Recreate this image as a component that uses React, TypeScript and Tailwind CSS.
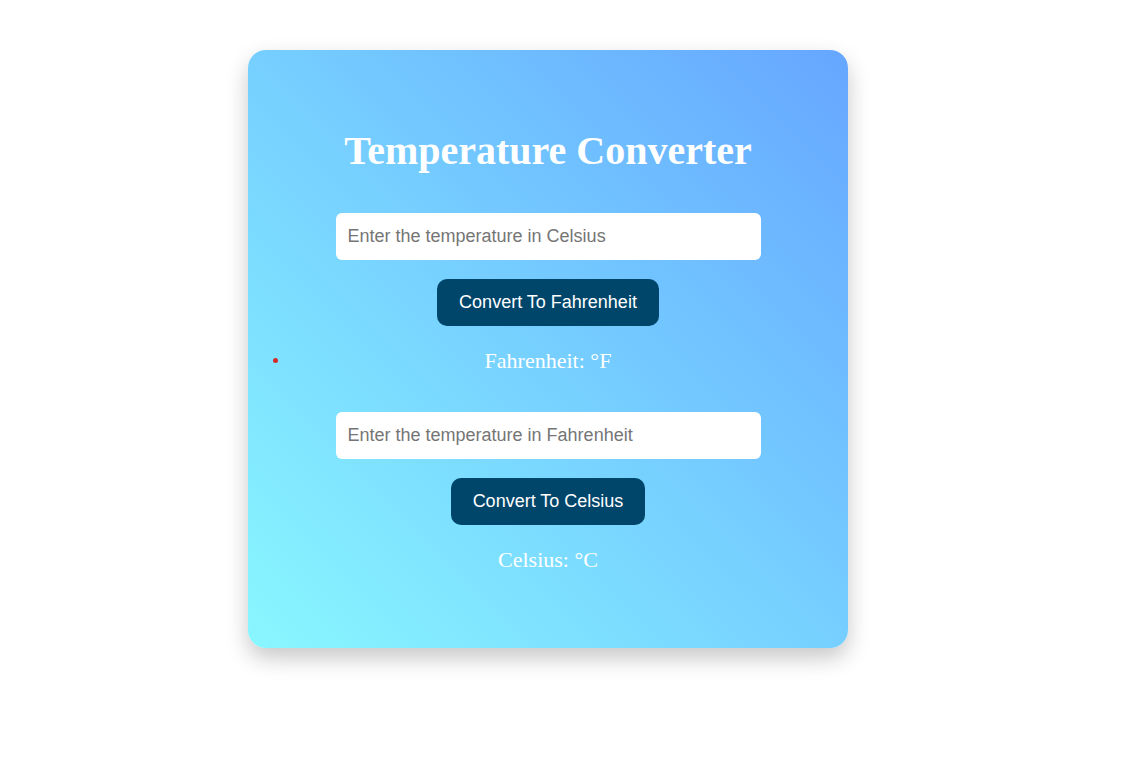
import { useState } from 'react'

function Converter({
  placeholder,
  label,
  result,
  unit,
  dot,
}: {
  placeholder: string
  label: string
  result: string
  unit: string
  dot?: boolean
}) {
  const [value, setValue] = useState('')

  return (
    <>
      <input
        value={value}
        onChange={(e) => setValue(e.target.value)}
        placeholder={placeholder}
        className="h-[47px] w-[425px] rounded-[6px] bg-white px-3 font-['Liberation_Sans',Arial,sans-serif] text-[18px] text-[#333] outline-none placeholder:text-[#757575]"
      />
      <button className="mt-[19px] h-[47px] rounded-[10px] bg-[#00456a] px-[22px] font-['Liberation_Sans',Arial,sans-serif] text-[18px] text-white">
        {label}
      </button>
      <div className="mt-[22px] grid w-full grid-cols-[1fr_auto_1fr] items-center">
        <div className="pl-[25px]">
          {dot && <span className="block h-[5px] w-[5px] rounded-full bg-[#d42a2a]" />}
        </div>
        <p className="font-['Liberation_Serif','Times_New_Roman',serif] text-[22px] leading-[25px] text-white">
          {result}: {unit}
        </p>
        <div />
      </div>
    </>
  )
}

export default function App() {
  return (
    <div className="min-h-[762px] bg-white pt-[50px] pl-[248px]">
      <div className="flex h-[598px] w-[600px] flex-col items-center rounded-[18px] bg-linear-to-tr from-[#89f7fe] to-[#66a6ff] pt-[78px] shadow-[0_10px_22px_rgba(0,0,0,0.22)]">
        <h1 className="font-['Liberation_Serif','Times_New_Roman',serif] text-[40px] leading-[46px] font-bold text-white">
          Temperature Converter
        </h1>
        <div className="mt-[39px] flex w-full flex-col items-center">
          <Converter placeholder="Enter the temperature in Celsius" label="Convert To Fahrenheit" result="Fahrenheit" unit="°F" dot />
        </div>
        <div className="mt-[39px] flex w-full flex-col items-center">
          <Converter placeholder="Enter the temperature in Fahrenheit" label="Convert To Celsius" result="Celsius" unit="°C" />
        </div>
      </div>
    </div>
  )
}
